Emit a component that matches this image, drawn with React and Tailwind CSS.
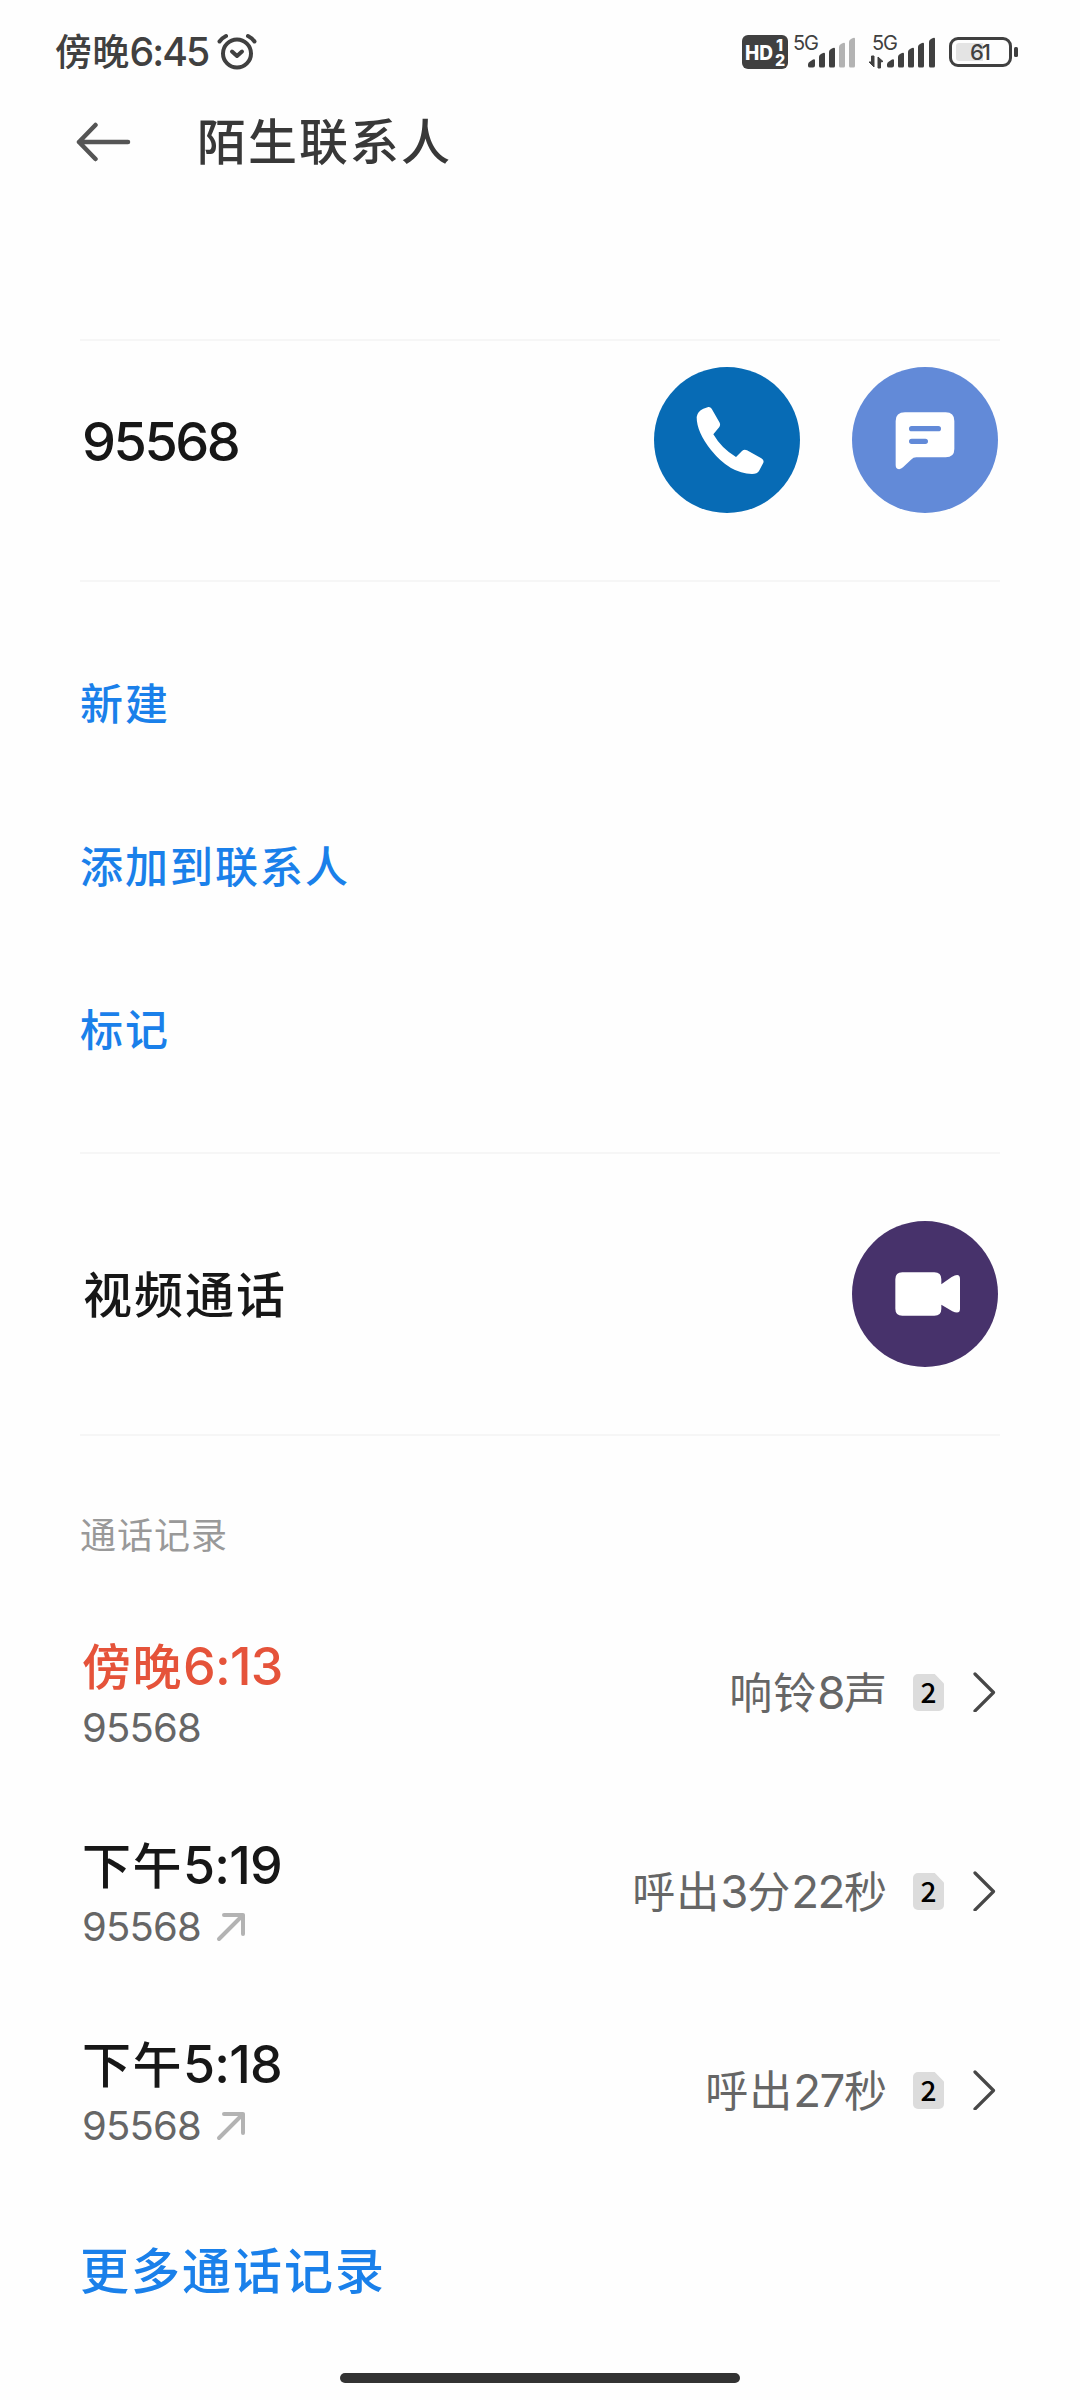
import React from 'react';

const calls = [
  { time: '傍晚6:13', number: '95568', detail: '响铃8声', sim: '2', missed: true },
  { time: '下午5:19', number: '95568', detail: '呼出3分22秒', sim: '2', outgoing: true },
  { time: '下午5:18', number: '95568', detail: '呼出27秒', sim: '2', outgoing: true },
];

const actions = ['新建', '添加到联系人', '标记'];

// Digits are set in Inter, everything else in the CJK face
function Mixed({ text, digits = 'tracking-[-0.03em]' }) {
  return text.split(/([\d:]+)/).filter(Boolean).map((part, i) =>
    /^\d/.test(part) ? (
      <span key={i} className={`font-['Inter'] text-[1.06em] ${digits}`}>{part}</span>
    ) : (
      <span key={i}>{part}</span>
    )
  );
}

function StatusBar() {
  return (
    <div className="flex h-[104px] items-center justify-between pl-[55px] pr-[61px] text-[#404040]">
      <div className="flex items-center">
        <span className="whitespace-nowrap text-[37px] font-medium leading-none tracking-[0.3px]">
          <Mixed text="傍晚6:45" digits="tracking-[-0.05em]" />
        </span>
        <svg className="ml-[9px] h-[38px] w-[40px]" viewBox="0 0 40 38" fill="none" stroke="currentColor" strokeWidth="4" strokeLinecap="round" strokeLinejoin="round">
          <circle cx="20" cy="20.500" r="14" />
          <path d="M15 18.500l5 4.500 5-4.500" />
          <path d="M2.500 8.500Q5 5 9 3M37.500 8.500Q35 5 31 3" />
        </svg>
      </div>
      <svg className="h-[44px] w-[277px]" viewBox="0 0 277 44" fill="#404040">
        <rect x="0" y="5" width="46" height="34" rx="6" />
        <text x="3" y="29.500" fill="#fff" fontFamily="Inter" fontSize="20" fontWeight="800" textLength="28" lengthAdjust="spacingAndGlyphs">HD</text>
        <text x="34" y="20.500" fill="#fff" fontFamily="Inter" fontSize="16" fontWeight="800">1</text>
        <text x="33" y="36" fill="#fff" fontFamily="Inter" fontSize="16" fontWeight="800">2</text>
        <text x="51" y="19.500" fontFamily="Inter" fontSize="20" textLength="26">5G</text>
        <path d="M66 35.500v-1q0-2 2-3l3-2q2-1 2 1v5q0 2-2 2h-3q-2 0-2-1.500zM77 27q0-2 2-3l2-1q2-1 2 1v12q0 1.500-1.500 1.500h-3q-1.500 0-1.500-1.500zM87 22q0-2 2-3l2-1q2-1 2 1v17q0 1.500-1.500 1.500h-3q-1.500 0-1.500-1.500z" />
        <path fill="#b3b3b3" d="M97 17q0-2 2-3l2-1q2-1 2 1v22q0 1.500-1.500 1.500h-3q-1.500 0-1.500-1.500zM107 12q0-2 2-3l2-1q2-1 2 1v27q0 1.500-1.500 1.500h-3q-1.500 0-1.500-1.500z" />
        <text x="130" y="19.500" fontFamily="Inter" fontSize="20" textLength="26">5G</text>
        <path d="M127 32l5 5v-11h-2.500v6zM141 31.500l-5-4.500v11h2.500v-6z" stroke="#404040" strokeWidth="1" />
        <path d="M145 35.500v-1q0-2 2-3l3-2q2-1 2 1v5q0 2-2 2h-3q-2 0-2-1.500zM156 27q0-2 2-3l2-1q2-1 2 1v12q0 1.500-1.500 1.500h-3q-1.500 0-1.500-1.500zM166 22q0-2 2-3l2-1q2-1 2 1v17q0 1.500-1.500 1.500h-3q-1.500 0-1.500-1.500zM176 17q0-2 2-3l2-1q2-1 2 1v22q0 1.500-1.500 1.500h-3q-1.500 0-1.500-1.500zM187 12q0-2 2-3l2-1q2-1 2 1v27q0 1.500-1.500 1.500h-3q-1.500 0-1.500-1.500z" />
        <rect x="208.500" y="8.500" width="60" height="27" rx="7.500" fill="none" stroke="#404040" strokeWidth="3" />
        <path d="M217 13h24v18h-24q-3 0-3-3V16q0-3 3-3z" fill="#e4e4e4" />
        <rect x="272" y="17" width="4" height="10" rx="1.500" />
        <text x="228" y="30" fontFamily="Inter" fontSize="22" fontWeight="500" textLength="21">61</text>
      </svg>
    </div>
  );
}

function PhoneButton() {
  return (
    <svg className="size-[146px]" viewBox="42 51 438 438">
      <circle cx="261" cy="270" r="219" fill="#076bb5" />
      <path
        fill="#fff"
        d="M205 171Q211 170 215 176L239 218Q242 225 238 231L220 253Q245 296 288 321L306 303Q313 297 321 301L364 325Q373 330 370 338L357 363Q352 372 336 372Q270 371 213 300Q170 246 170 201Q172 184 190 176Z"
      />
    </svg>
  );
}

function MessageButton() {
  return (
    <svg className="size-[146px]" viewBox="636 51 438 438">
      <circle cx="855" cy="270" r="219" fill="#628ad8" />
      <path
        fill="#fff"
        d="M795 187H917Q943 187 943 213V297Q943 322 917 322H829Q820 322 813 329L789 352Q782 359 774 357Q767 355 767 345V213Q767 187 795 187Z"
      />
      <path d="M815 236H895M815 274H856" stroke="#628ad8" strokeWidth="16" strokeLinecap="round" />
    </svg>
  );
}

function VideoButton() {
  return (
    <svg className="size-[146px]" viewBox="66 33 438 438">
      <circle cx="285" cy="252" r="219" fill="#47326b" />
      <path
        fill="#fff"
        d="M217 187H313Q334 187 334 208V223L365 201Q390 187 390 207V297Q390 314 367 304L334 284V296Q334 317 313 317H217Q196 317 196 296V208Q196 187 217 187Z"
      />
    </svg>
  );
}

function CallRow({ call }) {
  return (
    <div className="flex h-[199px] items-center justify-between">
      <div className="flex flex-col pl-[2px] pt-[4px]">
        <div className={call.missed ? 'flex h-[66px] items-center whitespace-nowrap text-[49px] font-medium tracking-[1.5px] text-[#e5533a]' : 'flex h-[66px] items-center whitespace-nowrap text-[49px] font-medium tracking-[1.5px] text-[#171717]'}>
          <div><Mixed text={call.time} digits="tracking-[-0.015em]" /></div>
        </div>
        <div className="flex h-[56px] items-center font-['Inter'] text-[40px] text-[#666666]">
          <span className="tracking-[-0.8px]">{call.number}</span>
          {call.outgoing && (
            <svg className="ml-[15px] size-[30px]" viewBox="0 0 30 30" fill="none" stroke="#b3b3b3" strokeWidth="4" strokeLinecap="round" strokeLinejoin="round">
              <path d="M3 27L27 3M8 3H27V22" />
            </svg>
          )}
        </div>
      </div>
      <div className="flex items-center pr-[4px]">
        <div className="whitespace-nowrap text-[43px] leading-none tracking-[1px] text-[#666666]">
          <Mixed text={call.detail} />
        </div>
        <div className="ml-[25px] flex h-[37px] w-[31px] items-center justify-center rounded-[5px] bg-[#dcdcdc] pb-[2px] font-['Noto_Sans_CJK_SC'] text-[28px] font-medium leading-none text-black [clip-path:polygon(0_0,70%_0,100%_26%,100%_100%,0_100%)]">
          {call.sim}
        </div>
        <svg className="ml-[28px] h-[40px] w-[24px]" viewBox="0 0 24 40" fill="none" stroke="#474747" strokeWidth="3.2" strokeLinecap="round" strokeLinejoin="round">
          <path d="M3 2L21.500 20.500L3 39" />
        </svg>
      </div>
    </div>
  );
}

export default function App() {
  return (
    <div className="flex h-[2400px] w-[1080px] flex-col overflow-hidden bg-[#fefefe] font-['Noto_Sans_CJK_SC',sans-serif]">
      <StatusBar />
      <header className="flex h-[76px] items-center pl-[75px] text-[#383838]">
        <svg className="h-[40px] w-[56px]" viewBox="0 0 56 40" fill="none" stroke="#555555" strokeWidth="4.500" strokeLinecap="round" strokeLinejoin="round">
          <path d="M53 20H4M20.500 3L4 20L20.500 37" />
        </svg>
        <h1 className="ml-[66px] pb-[8px] text-[49px] font-medium leading-none tracking-[2px]">陌生联系人</h1>
      </header>

      <main className="mx-[80px] mt-[159px] flex flex-col">
        <section className="h-[241px] border-t-2 border-[#f6f6f6] pt-[26px]">
          <div className="flex items-center justify-between pr-[2px]">
            <span className="pl-[2px] pt-[3px] font-['Inter'] text-[54px] font-medium leading-none tracking-[-2.500px] text-[#171717]">95568</span>
            <div className="flex gap-[52px]">
              <PhoneButton />
              <MessageButton />
            </div>
          </div>
        </section>

        <section className="h-[572px] border-t-2 border-[#f6f6f6] pt-[38px]">
          {actions.map((label) => (
            <div key={label} className="flex h-[163px] items-center text-[43px] font-medium leading-none tracking-[2px] text-[#1a80ea]">
              {label}
            </div>
          ))}
        </section>

        <section className="h-[282px] border-t-2 border-[#f6f6f6] pt-[67px]">
          <div className="flex items-center justify-between pr-[2px]">
            <span className="pb-[6px] pl-[3px] text-[49px] font-medium leading-none tracking-[2px] text-[#171717]">视频通话</span>
            <VideoButton />
          </div>
        </section>

        <section className="border-t-2 border-[#f6f6f6] pt-[67px]">
          <div className="flex h-[60px] items-center text-[36px] tracking-[1px] text-[#999999]">通话记录</div>
          <div className="mt-[30px]">
            {calls.map((call) => (
              <CallRow key={call.time} call={call} />
            ))}
          </div>
          <div className="mt-[38px] flex h-[80px] items-center text-[49px] font-medium tracking-[2px] text-[#1a80ea]">更多通话记录</div>
        </section>
      </main>

      <div className="mx-auto mt-auto mb-[17px] h-[10px] w-[400px] shrink-0 rounded-full bg-[#333333]" />
    </div>
  );
}
